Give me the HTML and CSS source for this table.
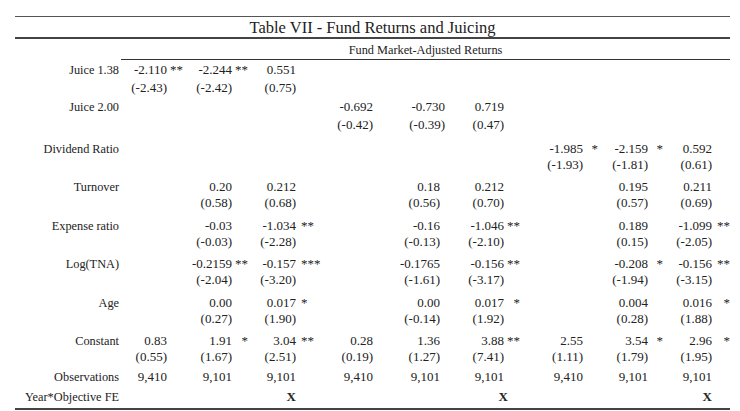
FILE: index.html
```html
<!DOCTYPE html>
<html>
<head>
<meta charset="utf-8">
<link rel="stylesheet" href="styles.css">
</head>
<body>
<div class="sheet">
  <div class="title">Table VII - Fund Returns and Juicing</div>
  <div class="subhead">Fund Market-Adjusted Returns</div>
  <div class="body">
    <div class="line"><span class="lab">Juice 1.38</span><span class="c1">-2.110</span><span class="s1">**</span><span class="c2">-2.244</span><span class="s2">**</span><span class="c3">0.551</span></div>
    <div class="line"><span class="c1">(-2.43)</span><span class="c2">(-2.42)</span><span class="c3">(0.75)</span></div>

    <div class="line"><span class="lab">Juice 2.00</span><span class="c4">-0.692</span><span class="c5 nudge">-0.730</span><span class="c6">0.719</span></div>
    <div class="line"><span class="c4">(-0.42)</span><span class="c5 nudge">(-0.39)</span><span class="c6">(0.47)</span></div>

    <div class="line"><span class="lab">Dividend Ratio</span><span class="c7">-1.985</span><span class="s7">*</span><span class="c8">-2.159</span><span class="s8">*</span><span class="c9">0.592</span></div>
    <div class="line"><span class="c7">(-1.93)</span><span class="c8">(-1.81)</span><span class="c9">(0.61)</span></div>

    <div class="line"><span class="lab">Turnover</span><span class="c2">0.20</span><span class="c3">0.212</span><span class="c5">0.18</span><span class="c6">0.212</span><span class="c8">0.195</span><span class="c9">0.211</span></div>
    <div class="line"><span class="c2">(0.58)</span><span class="c3">(0.68)</span><span class="c5">(0.56)</span><span class="c6">(0.70)</span><span class="c8">(0.57)</span><span class="c9">(0.69)</span></div>

    <div class="line"><span class="lab">Expense ratio</span><span class="c2">-0.03</span><span class="c3">-1.034</span><span class="s3">**</span><span class="c5">-0.16</span><span class="c6">-1.046</span><span class="s6">**</span><span class="c8">0.189</span><span class="c9">-1.099</span><span class="s9">**</span></div>
    <div class="line"><span class="c2">(-0.03)</span><span class="c3">(-2.28)</span><span class="c5">(-0.13)</span><span class="c6">(-2.10)</span><span class="c8">(0.15)</span><span class="c9">(-2.05)</span></div>

    <div class="line"><span class="lab">Log(TNA)</span><span class="c2">-0.2159</span><span class="s2">**</span><span class="c3">-0.157</span><span class="s3">***</span><span class="c5">-0.1765</span><span class="c6">-0.156</span><span class="s6">**</span><span class="c8">-0.208</span><span class="s8">*</span><span class="c9">-0.156</span><span class="s9">**</span></div>
    <div class="line"><span class="c2">(-2.04)</span><span class="c3">(-3.20)</span><span class="c5">(-1.61)</span><span class="c6">(-3.17)</span><span class="c8">(-1.94)</span><span class="c9">(-3.15)</span></div>

    <div class="line"><span class="lab">Age</span><span class="c2">0.00</span><span class="c3">0.017</span><span class="s3">*</span><span class="c5">0.00</span><span class="c6">0.017</span><span class="s6">*</span><span class="c8">0.004</span><span class="c9">0.016</span><span class="s9">*</span></div>
    <div class="line"><span class="c2">(0.27)</span><span class="c3">(1.90)</span><span class="c5">(-0.14)</span><span class="c6">(1.92)</span><span class="c8">(0.28)</span><span class="c9">(1.88)</span></div>

    <div class="line"><span class="lab">Constant</span><span class="c1">0.83</span><span class="c2">1.91</span><span class="s2">*</span><span class="c3">3.04</span><span class="s3">**</span><span class="c4">0.28</span><span class="c5">1.36</span><span class="c6">3.88</span><span class="s6">**</span><span class="c7">2.55</span><span class="c8">3.54</span><span class="s8">*</span><span class="c9">2.96</span><span class="s9">*</span></div>
    <div class="line"><span class="c1">(0.55)</span><span class="c2">(1.67)</span><span class="c3">(2.51)</span><span class="c4">(0.19)</span><span class="c5">(1.27)</span><span class="c6">(7.41)</span><span class="c7">(1.11)</span><span class="c8">(1.79)</span><span class="c9">(1.95)</span></div>

    <div class="line"><span class="lab">Observations</span><span class="c1">9,410</span><span class="c2">9,101</span><span class="c3">9,101</span><span class="c4">9,410</span><span class="c5">9,101</span><span class="c6">9,101</span><span class="c7">9,410</span><span class="c8">9,101</span><span class="c9">9,101</span></div>
    <div class="line"><span class="lab">Year*Objective FE</span><span class="c3 mark">X</span><span class="c6 mark nudge-x">X</span><span class="c9 mark">X</span></div>
  </div>
</div>
</body>
</html>
```

FILE: styles.css
```css
html, body {
  margin: 0;
  padding: 0;
  background: #ffffff;
}

body {
  font-family: "Liberation Serif", "Times New Roman", serif;
  color: #222222;
}

.sheet {
  width: 715px;
  margin: 16px 0 0 15px;
}

.title {
  border-top: 1px solid #555555;
  border-bottom: 2px solid #444444;
  padding-top: 2px;
  height: 18px;
  line-height: 18px;
  font-size: 16.5px;
  text-align: center;
}

.subhead {
  margin-left: 106px;
  border-bottom: 1px solid #333333;
  padding-top: 2px;
  height: 18px;
  line-height: 18px;
  font-size: 12.3px;
  text-align: center;
}

.body {
  display: grid;
  padding-top: 2px;
  grid-template-rows: 18px 19px 18px 24px 16px 22px 16px 23px 16px 22px 16px 23px 16px 22px 16px 20px 20px 19px;
  border-bottom: 2px solid #444444;
}

.line {
  display: grid;
  grid-template-columns:
    104px 48px 16px 49px 16px 48px 26px 51px 16px 51px 16px
    48px 16px 63px 15px 50px 15px 49px 18px;
  align-self: start;
  height: 16px;
  line-height: 16px;
  font-size: 13px;
  white-space: nowrap;
}

.line > span {
  grid-row: 1;
  text-align: right;
}

.lab {
  grid-column: 1;
  font-size: 12.3px;
}

.c1 { grid-column: 2; }
.s1 { grid-column: 3; }
.c2 { grid-column: 4; }
.s2 { grid-column: 5; }
.c3 { grid-column: 6; }
.line > .s3 { grid-column: 7; text-align: left; padding-left: 5px; }
.c4 { grid-column: 8; }
.s4 { grid-column: 9; }
.c5 { grid-column: 10; }
.s5 { grid-column: 11; }
.c6 { grid-column: 12; }
.s6 { grid-column: 13; }
.c7 { grid-column: 14; }
.s7 { grid-column: 15; }
.c8 { grid-column: 16; }
.s8 { grid-column: 17; }
.c9 { grid-column: 18; }
.s9 { grid-column: 19; }

.nudge {
  margin-right: -5px;
}

.mark {
  font-weight: bold;
}

.nudge-x {
  margin-right: -4px;
}
```
